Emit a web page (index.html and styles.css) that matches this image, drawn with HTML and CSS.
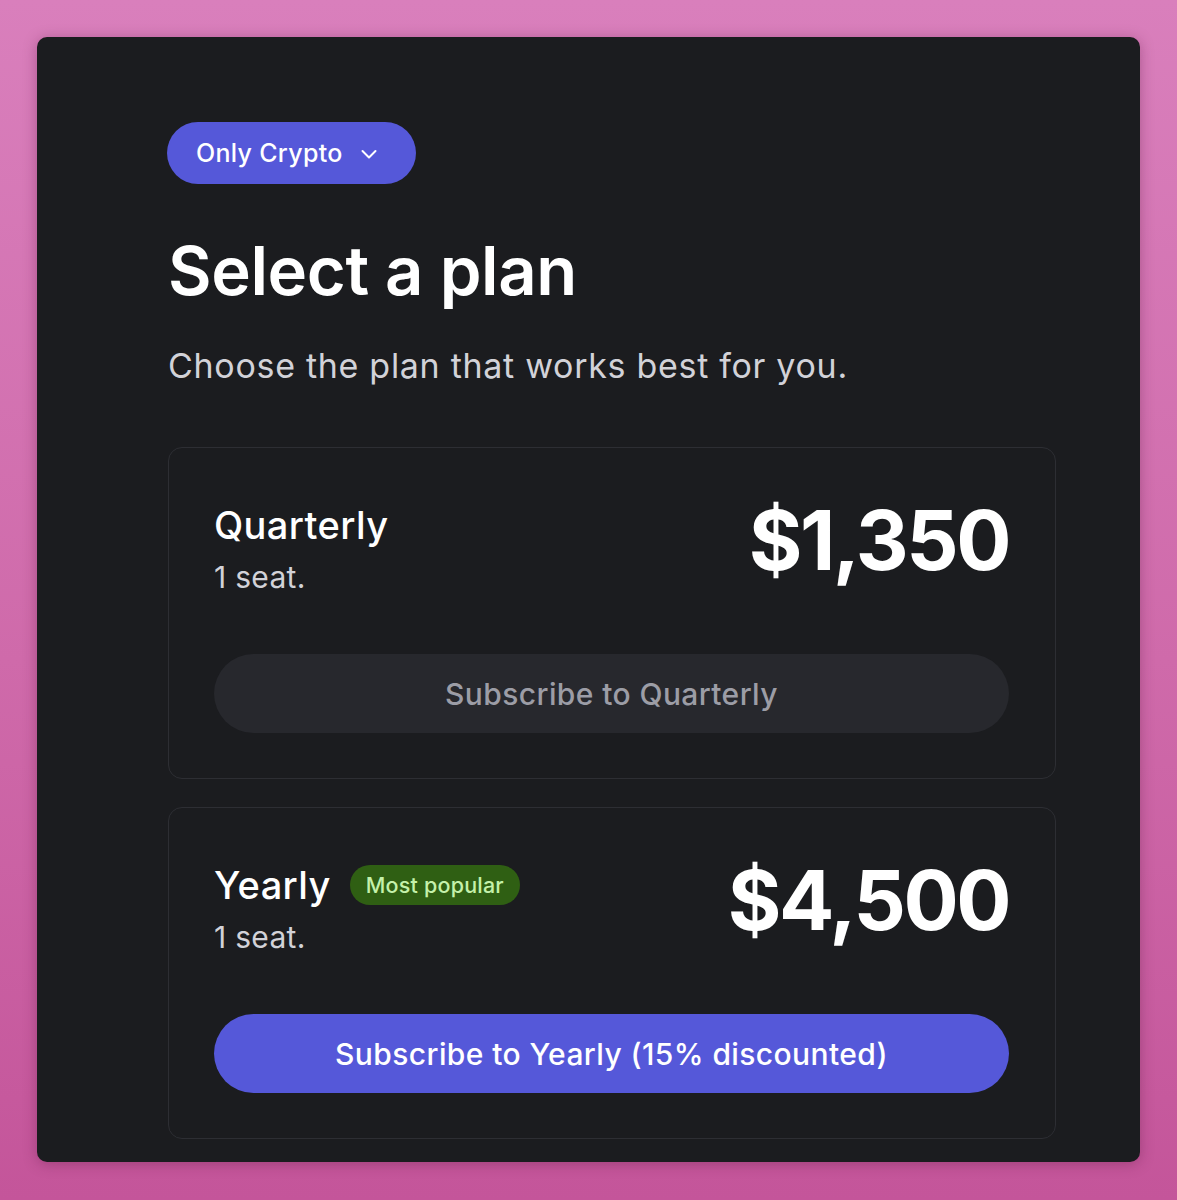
FILE: index.html
```html
<!DOCTYPE html>
<html lang="en">
<head>
    <meta charset="UTF-8">
    <title>Select a plan</title>
    <link rel="stylesheet" href="styles.css">
</head>
<body>
    <div class="panel">
        <button class="pill">
            Only Crypto
            <svg class="chevron" width="20" height="20" viewBox="0 0 20 20" fill="none">
                <path d="M3.5 7l6.5 6.5 6.5-6.5" stroke="#fff" stroke-width="2" stroke-linecap="round" stroke-linejoin="round"/>
            </svg>
        </button>
        <h1 class="title">Select a plan</h1>
        <p class="subtitle">Choose the plan that works best for you.</p>

        <div class="plans">
            <div class="card">
                <div class="card-head">
                    <div class="info">
                        <div class="name-row">
                            <span class="name">Quarterly</span>
                        </div>
                        <div class="seats">1 seat.</div>
                    </div>
                    <div class="price">$1,350</div>
                </div>
                <button class="btn btn-muted">Subscribe to Quarterly</button>
            </div>

            <div class="card">
                <div class="card-head">
                    <div class="info">
                        <div class="name-row">
                            <span class="name">Yearly</span>
                            <span class="badge">Most popular</span>
                        </div>
                        <div class="seats">1 seat.</div>
                    </div>
                    <div class="price">$4,500</div>
                </div>
                <button class="btn btn-primary">Subscribe to Yearly (15% discounted)</button>
            </div>
        </div>
    </div>
</body>
</html>
```

FILE: styles.css
```css
*{
    margin:0;
    padding:0;
    box-sizing: border-box;
}
body{
    font-family: Inter, "Noto Sans", sans-serif;
    background: linear-gradient(180deg, #d97fbc 0%, #cf6aaa 55%, #c4559a 100%);
    min-height: 1200px;
    padding: 37px 37px 0 37px;
}
.panel{
    height: 1125px;
    background-color: #1b1c1f;
    border-radius: 10px;
    padding: 85px 84px 0 131px;
    box-shadow: 0 2px 14px rgba(90, 20, 60, 0.35);
    overflow: hidden;
}
.pill{
    display: inline-flex;
    align-items: center;
    gap: 16px;
    height: 62px;
    margin-left: -1px;
    padding: 0 37px 0 29px;
    border: 0;
    border-radius: 31px;
    background-color: #5558d9;
    color: #fff;
    font-family: inherit;
    font-size: 25px;
    font-weight: 500;
    letter-spacing: 0.3px;
    cursor: pointer;
}
.chevron{
    margin-top: 1px;
}
.title{
    margin-top: 46px;
    font-size: 67px;
    line-height: 82px;
    font-weight: 600;
    color: #fff;
    letter-spacing: -0.4px;
}
.subtitle{
    margin-top: 32px;
    font-size: 34px;
    line-height: 44px;
    color: #d2d2d8;
    letter-spacing: 0.7px;
}
.plans{
    margin-top: 59px;
    display: flex;
    flex-direction: column;
    gap: 28px;
}
.card{
    border: 1.5px solid #2d2e33;
    border-radius: 14px;
    padding: 54px 46px 45px 45px;
    height: 332px;
}
.card-head{
    display: flex;
    justify-content: space-between;
    align-items: flex-start;
}
.name-row{
    display: flex;
    align-items: center;
    gap: 19px;
    height: 46px;
}
.name{
    font-size: 38px;
    font-weight: 500;
    color: #fff;
    letter-spacing: 0.4px;
}
.badge{
    height: 40px;
    line-height: 40px;
    padding: 0 16px;
    border-radius: 20px;
    background-color: #2f5f13;
    color: #c4f1aa;
    font-size: 21.5px;
    font-weight: 500;
    letter-spacing: 0.2px;
}
.seats{
    font-size: 30px;
    line-height: 39px;
    color: #d2d2d8;
    margin-top: 10px;
    letter-spacing: 0.3px;
}
.price{
    font-size: 82px;
    line-height: 86px;
    font-weight: 700;
    color: #fff;
    letter-spacing: -2.5px;
    margin-top: -4px;
    margin-right: 0;
}
.btn{
    display: block;
    width: 100%;
    height: 79px;
    margin-top: 57px;
    border: 0;
    border-radius: 40px;
    font-family: inherit;
    font-size: 30px;
    font-weight: 500;
    letter-spacing: 0.4px;
    cursor: pointer;
}
.btn-muted{
    background-color: #27282d;
    color: #9c9da6;
}
.btn-primary{
    background-color: #5558d9;
    color: #fff;
}
```
